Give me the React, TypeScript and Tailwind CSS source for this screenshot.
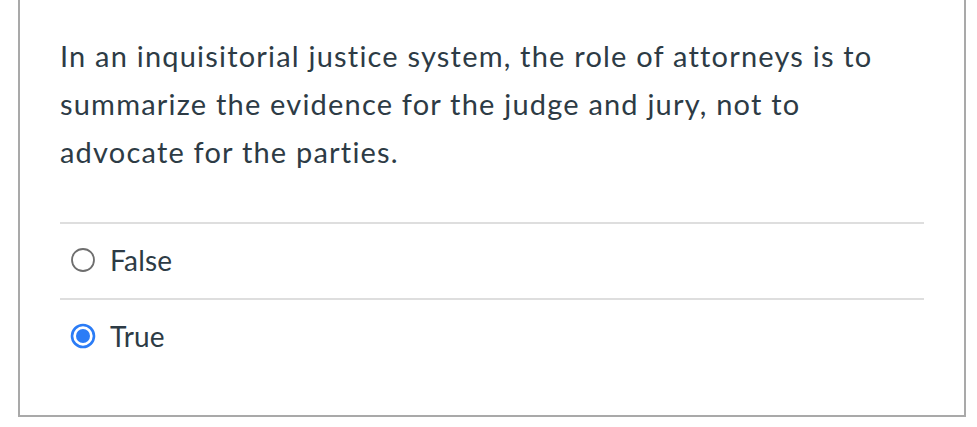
function RadioIcon({ checked }: { checked: boolean }) {
  return checked ? (
    <svg width="26" height="26" viewBox="0 0 26 26">
      <circle cx="13" cy="13" r="11" fill="none" stroke="#2b7cf6" strokeWidth="2.6" />
      <circle cx="13" cy="13" r="7" fill="#2b7cf6" />
    </svg>
  ) : (
    <svg width="26" height="26" viewBox="0 0 26 26">
      <circle cx="13" cy="13" r="11" fill="none" stroke="#6e6e6e" strokeWidth="1.8" />
    </svg>
  );
}

const options = [
  { label: "False", checked: false },
  { label: "True", checked: true },
];

export default function App() {
  return (
    <div className="h-[427px] w-[977px] bg-white font-['Lato','Noto_Sans',sans-serif] text-[#2d3b45]">
      <div className="ml-[18px] h-[417px] w-[948px] border-2 border-t-0 border-[#a9a9a9] px-10 pt-[32px]">
        <p className="text-[29px] leading-[48px] tracking-[1.2px]">
          In an inquisitorial justice system, the role of attorneys is to summarize the evidence
          for the judge and jury, not to advocate for the parties.
        </p>
        <div className="mt-[46px]">
          {options.map((o) => (
            <div key={o.label}>
              <div className="h-[2px] bg-[#dedede]" />
              <label className="flex h-[74px] items-center gap-[14px] pb-[2px] pl-[10px]">
                <RadioIcon checked={o.checked} />
                <span className="text-[28px] tracking-[0.2px]">{o.label}</span>
              </label>
            </div>
          ))}
        </div>
      </div>
    </div>
  );
}
